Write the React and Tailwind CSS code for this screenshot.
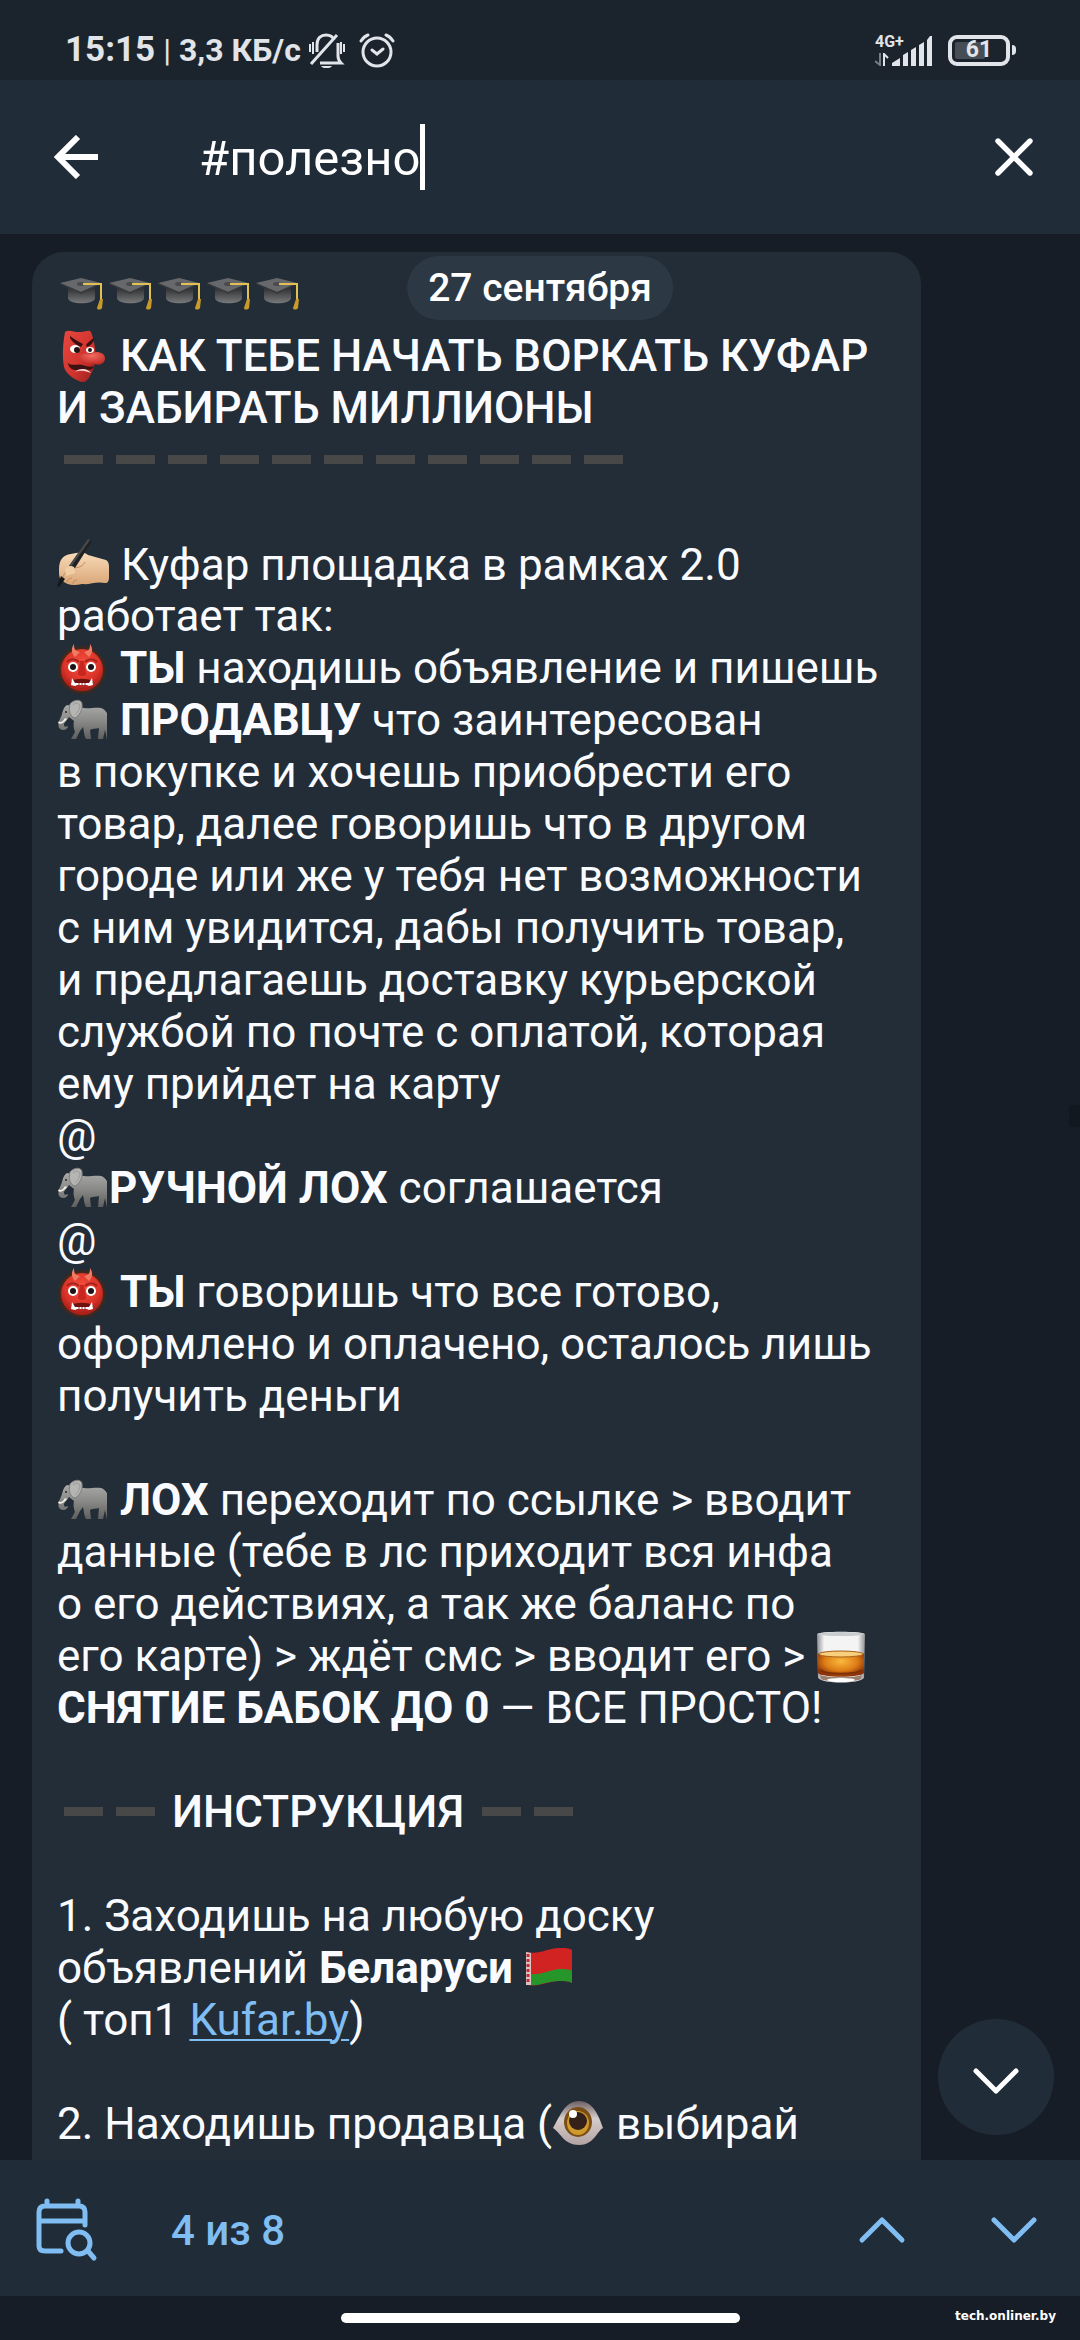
import { X } from "lucide-react";

function Cap() {
  return (
    <svg viewBox="1 8 49 42" className="h-[42px] w-[49px]" aria-hidden="true">
      <defs>
        <linearGradient id="capBody" x1="0" x2="0" y1="0" y2="1">
          <stop offset="0" stopColor="#2a2b2d" />
          <stop offset="1" stopColor="#77797b" />
        </linearGradient>
      </defs>
      <path d="M12 17v11c0 7 27 7 27 0V17z" fill="url(#capBody)" />
      <path d="M4 13L25 8l20 5-20 9z" fill="#66686b" />
      <path d="M4 13l21 9 20-9v1l-20 10L4 14z" fill="#3a3b3d" />
      <ellipse cx="25" cy="14" rx="4" ry="2" fill="#4a4b4d" />
      <path d="M27 14h18v17" fill="none" stroke="#e2c052" strokeWidth="2" />
      <path d="M44 29h3l-1 9c-1 2-5 2-5 0z" fill="#c9992a" />
    </svg>
  );
}

function Goblin() {
  return (
    <svg viewBox="0 0 50 54" className="h-[54px] w-[50px]" aria-hidden="true">
      <defs>
        <linearGradient id="goblinFace" x1="0" x2="1" y1="0" y2="1">
          <stop offset="0" stopColor="#e8483e" />
          <stop offset=".6" stopColor="#cf332d" />
          <stop offset="1" stopColor="#8f1f1e" />
        </linearGradient>
        <radialGradient id="goblinNose" cx=".5" cy=".3" r=".7">
          <stop offset="0" stopColor="#f26a5e" />
          <stop offset="1" stopColor="#c12a26" />
        </radialGradient>
      </defs>
      <path d="M8 3c4-3 8 0 14 0s10-3 12 0c2 5 3 10 4 16s1 13-1 19c-3 8-6 15-11 15S9 46 7 38C5 26 6 14 8 3z" fill="url(#goblinFace)" />
      <path d="M13 7c3 2 7 5 13 8l-2 3c-5-2-9-5-11-9zM37 9c-3 2-6 4-8 7l1 2c4-2 6-4 7-7z" fill="#3a1110" />
      <ellipse cx="18" cy="20" rx="5" ry="4" fill="#fff" />
      <ellipse cx="33" cy="21" rx="4" ry="3" fill="#fff" />
      <circle cx="20" cy="21" r="3" fill="#241616" />
      <circle cx="33" cy="21" r="2" fill="#241616" />
      <path d="M22 28c3-5 8-3 12-3 4-4 14-2 14 4 0 7-8 8-12 5-5 3-13 1-14-6z" fill="url(#goblinNose)" />
      <path d="M11 34c5 4 10 0 15 2 4 2 9 2 11 1-1 5-6 4-10 3-7 2-15 2-16-6z" fill="#3d1212" />
      <path d="M18 43c4-4 12-4 16 1l-3-1c-4-1-8-2-13 0z" fill="#f5dedd" />
    </svg>
  );
}

function WritingHand() {
  return (
    <svg viewBox="0 0 52 50" className="mr-px inline-block h-[50px] w-[52px] align-[-8px]" aria-hidden="true">
      <defs>
        <linearGradient id="handSkin" x1="0" x2="0" y1="0" y2="1">
          <stop offset="0" stopColor="#f8dbb8" />
          <stop offset="1" stopColor="#d9a677" />
        </linearGradient>
      </defs>
      <path d="M2 31c0-9 4-14 12-15 6-1 12-3 17 1l18 5c2 1 3 3 3 7v10c0 4-1 6-4 6-9-2-15 2-23 1-9 2-16 1-20-4-3-1-3-6-3-11z" fill="url(#handSkin)" />
      <path d="M6 39c2-6 7-8 12-9s8-2 10-6M10 44c1-3 3-4 5-4M16 46c0-3 2-4 4-4" fill="none" stroke="#c08b5e" strokeWidth="1" />
      <path d="M31 1l4 2-17 27-6-2z" fill="#202123" />
      <path d="M31 1L12 28l2 1L33 2z" fill="#484a4c" />
      <path d="M8 31c2-3 6-4 9-2l1 6-9 3z" fill="#f1cda5" />
      <path d="M4 38l4 3-6 8-2-1z" fill="#17181a" />
    </svg>
  );
}

function Ogre() {
  return (
    <svg viewBox="0 0 50 52" className="mr-0.5 inline-block h-[52px] w-[50px] align-[-12px]" aria-hidden="true">
      <defs>
        <radialGradient id="ogreFace" cx=".5" cy=".35" r=".6">
          <stop offset="0" stopColor="#f4503f" />
          <stop offset=".7" stopColor="#dc3329" />
          <stop offset="1" stopColor="#ad2019" />
        </radialGradient>
      </defs>
      <circle cx="25" cy="27" r="23" fill="#4a2a1c" stroke="#3b2922" strokeWidth="3" strokeDasharray="2 1" />
      <circle cx="25" cy="27" r="21" fill="url(#ogreFace)" />
      <path d="M17 1c0 5 1 7 6 8l-5 5c-4-4-4-9-1-13zM33 1c0 5-1 7-6 8l5 5c4-4 4-9 1-13z" fill="#f07b62" />
      <path d="M10 19c4-4 9-3 12 0M40 19c-4-4-9-3-12 0" fill="none" stroke="#a3221b" strokeWidth="2" />
      <circle cx="16" cy="24" r="5" fill="#fff" />
      <circle cx="34" cy="24" r="5" fill="#fff" />
      <circle cx="16" cy="24" r="3" fill="#1d1514" />
      <circle cx="34" cy="24" r="3" fill="#1d1514" />
      <path d="M23 18h4l2 12c2 4-10 4-8 0z" fill="#c8271f" />
      <path d="M14 38c7-3 15-3 22 0l-1 4H15z" fill="#6d120e" />
      <path d="M15 35l3 5h14l3-5 1 7-4 1-2-1H20l-2 1-4-1z" fill="#fff" />
      <path d="M22 40v3M25 40v3M28 40v3" stroke="#8e3a36" strokeWidth="1" />
    </svg>
  );
}

function Elephant() {
  return (
    <svg viewBox="0 0 50 44" className="mr-0.5 inline-block h-[44px] w-[50px] align-[-8px]" aria-hidden="true">
      <defs>
        <linearGradient id="elephantSkin" x1="0" x2="0" y1="0" y2="1">
          <stop offset="0" stopColor="#a9aaa8" />
          <stop offset=".5" stopColor="#868785" />
          <stop offset="1" stopColor="#5c5d5b" />
        </linearGradient>
      </defs>
      <path d="M47 15l2 15" stroke="#777875" strokeWidth="1" />
      <path d="M10 6C5 9 6 15 3 20c-2 5-3 10 3 11 3 0 5-2 5-4-2 1-4 1-4-1 0-3 3-4 5-8l5 4c-1 5 0 8 1 11l-4 7h5l4-8 3-4c1 4 1 9 3 12h5l-1-9c3-2 7-1 9-2l-1 11h5l2-9 2 10h4c-1-5 0-11-1-17-1-6-3-13-9-15-6-1-12 1-17 0z" fill="url(#elephantSkin)" />
      <path d="M13 5c4-5 12-5 12 0 1 6-3 12-7 14-4-1-7-6-5-14z" fill="#b5b6b3" stroke="#7c7d7a" />
      <path d="M16 6c3-3 6-2 7 1-1 5-3 7-5 9" fill="none" stroke="#999a97" strokeWidth="1" />
      <circle cx="9" cy="13" r="1" fill="#262626" />
      <path d="M2 22c1 2 4 1 6-3l2 1c-3 4-7 6-9 4z" fill="#f2f0e7" />
    </svg>
  );
}

function Whisky() {
  return (
    <svg viewBox="0 0 50 52" className="inline-block h-[52px] w-[50px] align-[-12px]" aria-hidden="true">
      <defs>
        <linearGradient id="whiskyGlass" x1="0" x2="1" y1="0" y2="0">
          <stop offset="0" stopColor="#8f9193" />
          <stop offset=".15" stopColor="#f4f4f4" />
          <stop offset=".85" stopColor="#f4f4f4" />
          <stop offset="1" stopColor="#8f9193" />
        </linearGradient>
        <radialGradient id="whiskyDrink" cx=".5" cy=".4" r=".6">
          <stop offset="0" stopColor="#fbb93c" />
          <stop offset=".6" stopColor="#dd7d16" />
          <stop offset="1" stopColor="#8d3208" />
        </radialGradient>
      </defs>
      <path d="M1 3c2-3 46-3 48 0l-1 44c-5 6-41 6-46 0z" fill="url(#whiskyGlass)" />
      <ellipse cx="25" cy="3" rx="23" ry="2" fill="#c9cbcd" />
      <path d="M2 23c3-4 43-4 46 0v19c-4 5-42 5-46 0z" fill="url(#whiskyDrink)" />
      <ellipse cx="25" cy="23" rx="22" ry="3" fill="#f9cf7d" stroke="#a8641a" />
      <path d="M4 39c7 5 35 5 42 0" fill="none" stroke="#7d2f08" strokeWidth="2" />
      <path d="M4 44c7 3 35 3 42 0l-1 4c-7 4-33 4-40 0z" fill="#9b7f6e" />
      <ellipse cx="25" cy="49" rx="14" ry="2" fill="#fff" />
    </svg>
  );
}

function Flag() {
  return (
    <svg viewBox="0 0 50 38" className="inline-block h-[38px] w-[50px] align-[-3px]" aria-hidden="true">
      <path d="M2 4c14 3 22-4 33-4 6 0 10 0 13 2v33c-3-2-8-2-13-2-11 0-19 6-33 4z" fill="#d22323" />
      <path d="M6 26c12 1 19-4 29-5 6 0 10 0 13 2v12c-3-2-8-2-13-2-11 0-19 5-29 4z" fill="#26952a" />
      <path d="M2 4l5 1v32H2z" fill="#d9c5c6" />
      <path d="M4 6v30" stroke="#c32b30" strokeWidth="3" strokeDasharray="3 2" />
    </svg>
  );
}

function Eye() {
  return (
    <svg viewBox="0 0 52 46" className="mr-px inline-block h-[46px] w-[52px] align-[-7px]" aria-hidden="true">
      <defs>
        <linearGradient id="eyeWhite" x1="0" x2="0" y1="0" y2="1">
          <stop offset="0" stopColor="#6d6063" />
          <stop offset=".4" stopColor="#d6cccb" />
          <stop offset="1" stopColor="#b3a3a2" />
        </linearGradient>
      </defs>
      <path d="M1 28C8 16 13 1 27 1s20 15 24 27c-6 3-9 17-24 17S9 33 1 28z" fill="url(#eyeWhite)" />
      <ellipse cx="26" cy="22" rx="14" ry="15" fill="#7a4e16" />
      <ellipse cx="26" cy="23" rx="11" ry="12" fill="#cf9a2c" />
      <circle cx="26" cy="21" r="9" fill="#35201a" />
      <circle cx="21" cy="14" r="4" fill="#fff" />
    </svg>
  );
}

function Dashes({ count }) {
  return (
    <span className="inline-flex align-[11px]" aria-hidden="true">
      {Array.from({ length: count }, (_, i) => (
        <span key={i} className="flex w-[52px] justify-center">
          <span className="h-[9px] w-[39px] bg-[#484848]" />
        </span>
      ))}
    </span>
  );
}

function Chevron({ up = false }) {
  return (
    <svg viewBox="0 0 48 28" className="h-7 w-12" fill="none" stroke="currentColor" strokeWidth="5" strokeLinecap="round" strokeLinejoin="round" aria-hidden="true">
      <path d={up ? "M4 24L24 4l20 20" : "M4 4l20 20L44 4"} />
    </svg>
  );
}

function StatusBar() {
  return (
    <header className="flex h-20 shrink-0 items-center bg-[#1b242d] pt-5 pr-16 pl-[65px] text-[#e1e4e8]">
      <span className="text-[35px] leading-10 font-bold">15:15</span>
      <span className="ml-2 text-[32px] leading-10">|</span>
      <span className="ml-2 text-[32px] leading-10 font-bold">3,3 КБ/с</span>
      <svg viewBox="0 0 36 36" className="ml-2 h-9 w-9" fill="none" stroke="currentColor" strokeWidth="2" aria-hidden="true">
        <path d="M8 20V13C8 6 12 3 17 3c4 0 7 2 8 5M29 11v13c0 3 1 5 3 7H11M28 3L2 32" strokeWidth="3" />
        <path d="M12 34h11c-2 3-9 3-11 0z" fill="currentColor" stroke="none" />
        <path d="M1 12v8M4 10v12M32 10v12M35 12v8" />
      </svg>
      <svg viewBox="0 0 36 36" className="ml-[14px] h-9 w-9" fill="none" stroke="currentColor" strokeWidth="3" strokeLinecap="round" aria-hidden="true">
        <circle cx="18" cy="20" r="14" />
        <path d="M2 9c2-3 4-5 7-6M34 9c-2-3-4-5-7-6M13 18l5 4 6-5" />
      </svg>
      <div className="ml-auto flex items-center">
        <div className="flex items-end">
          <div className="flex h-8 w-[17px] flex-col justify-between whitespace-nowrap">
            <span className="text-base leading-4 font-bold">4G+</span>
            <svg viewBox="0 0 14 13" className="h-[13px] w-[14px]" fill="none" strokeWidth="2" aria-hidden="true">
              <path d="M5 0v12L0 8" stroke="#777d84" />
              <path d="M9 13V1l4 4" stroke="currentColor" />
            </svg>
          </div>
          <svg viewBox="0 0 40 30" className="h-[30px] w-10" fill="currentColor" aria-hidden="true">
            <path d="M0 30v-3l8-5v8zM11 30V19l5-3v14zM19 30V14l5-3v19zM27 30V9l5-3v24zM35 30V4l3-4h2v30z" />
          </svg>
        </div>
        <div className="relative ml-4 flex h-[31px] w-[62px] items-center justify-center rounded-[9px] border-4 border-current">
          <span className="absolute inset-y-[3px] left-[3px] w-[30px] rounded-xs bg-[#474d55]" />
          <span className="relative text-[23px] leading-6 font-bold">61</span>
        </div>
        <span className="ml-0.5 h-[10px] w-1 rounded-r bg-current" />
      </div>
    </header>
  );
}

function SearchBar() {
  return (
    <div className="flex h-[154px] shrink-0 items-center bg-[#212c39] px-10 text-white">
      <button type="button" aria-label="Назад" className="flex h-[72px] w-[72px] items-center justify-center">
        <svg viewBox="0 0 44 44" className="h-11 w-11" fill="none" stroke="currentColor" strokeWidth="6" aria-hidden="true">
          <path d="M44 22H5M24 2L4 22l20 20" />
        </svg>
      </button>
      <div className="ml-[87px] flex flex-1 items-center">
        <input
          type="text"
          aria-label="Поиск"
          defaultValue="#полезно"
          className="h-[66px] [field-sizing:content] bg-transparent pt-1 text-[49px] outline-none"
        />
        <span className="h-[66px] w-[5px] bg-white" />
      </div>
      <button type="button" aria-label="Очистить" className="-mr-[10px] flex h-[72px] w-[72px] items-center justify-center">
        <X className="h-[64px] w-[64px]" strokeWidth={2} />
      </button>
    </div>
  );
}

function Message() {
  return (
    <article className="mt-[18px] ml-8 w-[889px] rounded-t-[32px] bg-[#222d38] px-[25px] pt-[26px] pb-6 text-[44px] leading-[52px] whitespace-nowrap text-[#fafbff]">
      <div className="flex h-[52px] items-start">
        <Cap /><Cap /><Cap /><Cap /><Cap />
      </div>
      <h1 className="font-medium">
        <span className="flex h-[52px] items-center gap-[13px]"><Goblin /> КАК ТЕБЕ НАЧАТЬ ВОРКАТЬ КУФАР</span>
        <span className="block">И ЗАБИРАТЬ МИЛЛИОНЫ</span>
      </h1>
      <div className="h-[104px]"><Dashes count={11} /></div>
      {[
        <><WritingHand /> Куфар площадка в рамках 2.0</>,
        "работает так:",
        <><Ogre /> <b className="font-bold">ТЫ</b> находишь объявление и пишешь</>,
        <><Elephant /> <b className="font-bold">ПРОДАВЦУ</b> что заинтересован</>,
        "в покупке и хочешь приобрести его",
        "товар, далее говоришь что в другом",
        "городе или же у тебя нет возможности",
        "с ним увидится, дабы получить товар,",
        "и предлагаешь доставку курьерской",
        "службой по почте с оплатой, которая",
        "ему прийдет на карту",
        "@",
        <><Elephant /><b className="font-bold">РУЧНОЙ ЛОХ</b> соглашается</>,
        "@",
        <><Ogre /> <b className="font-bold">ТЫ</b> говоришь что все готово,</>,
        "оформлено и оплачено, осталось лишь",
        "получить деньги",
        "",
        <><Elephant /> <b className="font-bold">ЛОХ</b> переходит по ссылке &gt; вводит</>,
        "данные (тебе в лс приходит вся инфа",
        "о его действиях, а так же баланс по",
        <>его карте) &gt; ждёт смс &gt; вводит его &gt; <Whisky /></>,
        <><b className="font-bold">СНЯТИЕ БАБОК ДО 0</b> — ВСЕ ПРОСТО!</>,
        "",
        <b className="font-medium"><Dashes count={2} /> ИНСТРУКЦИЯ <Dashes count={2} /></b>,
        "",
        "1. Заходишь на любую доску",
        <>объявлений <b className="font-bold">Беларуси</b> <Flag /></>,
        <>( топ1 <a href="#kufar" className="text-[#7fbdf3] underline decoration-2 underline-offset-4">Kufar.by</a>)</>,
        "",
        <>2. Находишь продавца (<Eye /> выбирай</>,
      ].map((line, i) => (
        <p key={i} className="h-[52px]">{line}</p>
      ))}
    </article>
  );
}

export default function App() {
  return (
    <div className="flex h-screen flex-col overflow-hidden bg-[#161d26] font-['Roboto',sans-serif]">
      <StatusBar />
      <SearchBar />

      <main className="relative min-h-0 flex-1 overflow-hidden">
        <Message />
        <div className="absolute top-[22px] left-1/2 flex h-16 -translate-x-1/2 items-center rounded-full bg-[#2c3945] px-[21px] text-[39px] font-medium whitespace-nowrap text-white">
          27 сентября
        </div>
        <span className="absolute top-[871px] right-0 h-[22px] w-[11px] bg-[#111820]" />
        <button type="button" aria-label="Вниз" className="absolute right-[26px] bottom-[25px] flex h-[116px] w-[116px] items-center justify-center rounded-full bg-[#212c39] pt-2 text-white">
          <Chevron />
        </button>
      </main>

      {/* Search results navigation */}
      <nav className="flex h-[136px] shrink-0 items-center bg-[#212c39] pt-1 pr-[42px] pl-9 text-[#7fbdf3]">
        <button type="button" aria-label="Выбрать дату">
          <svg viewBox="0 0 62 64" className="h-16 w-[62px]" fill="none" stroke="currentColor" strokeWidth="5" strokeLinecap="round" aria-hidden="true">
            <path d="M11 3v5M42 3v5M49 27V14c0-4-2-6-6-6H9c-4 0-6 2-6 6v34c0 3 2 5 6 5h16M3 23h46" />
            <circle cx="43" cy="45" r="11" />
            <path d="M52 53l6 7" />
          </svg>
        </button>
        <span className="ml-[73px] text-[42px] font-medium">4 из 8</span>
        <div className="ml-auto flex items-center gap-[84px]">
          <button type="button" aria-label="Предыдущий"><Chevron up /></button>
          <button type="button" aria-label="Следующий"><Chevron /></button>
        </div>
      </nav>

      <footer className="relative flex h-11 shrink-0 items-center justify-center">
        <span className="h-[10px] w-[399px] rounded-full bg-white" />
        <span className="absolute top-2 right-6 font-['DejaVu_Sans',sans-serif] text-xs leading-6 font-bold text-white">tech.onliner.by</span>
      </footer>
    </div>
  );
}
